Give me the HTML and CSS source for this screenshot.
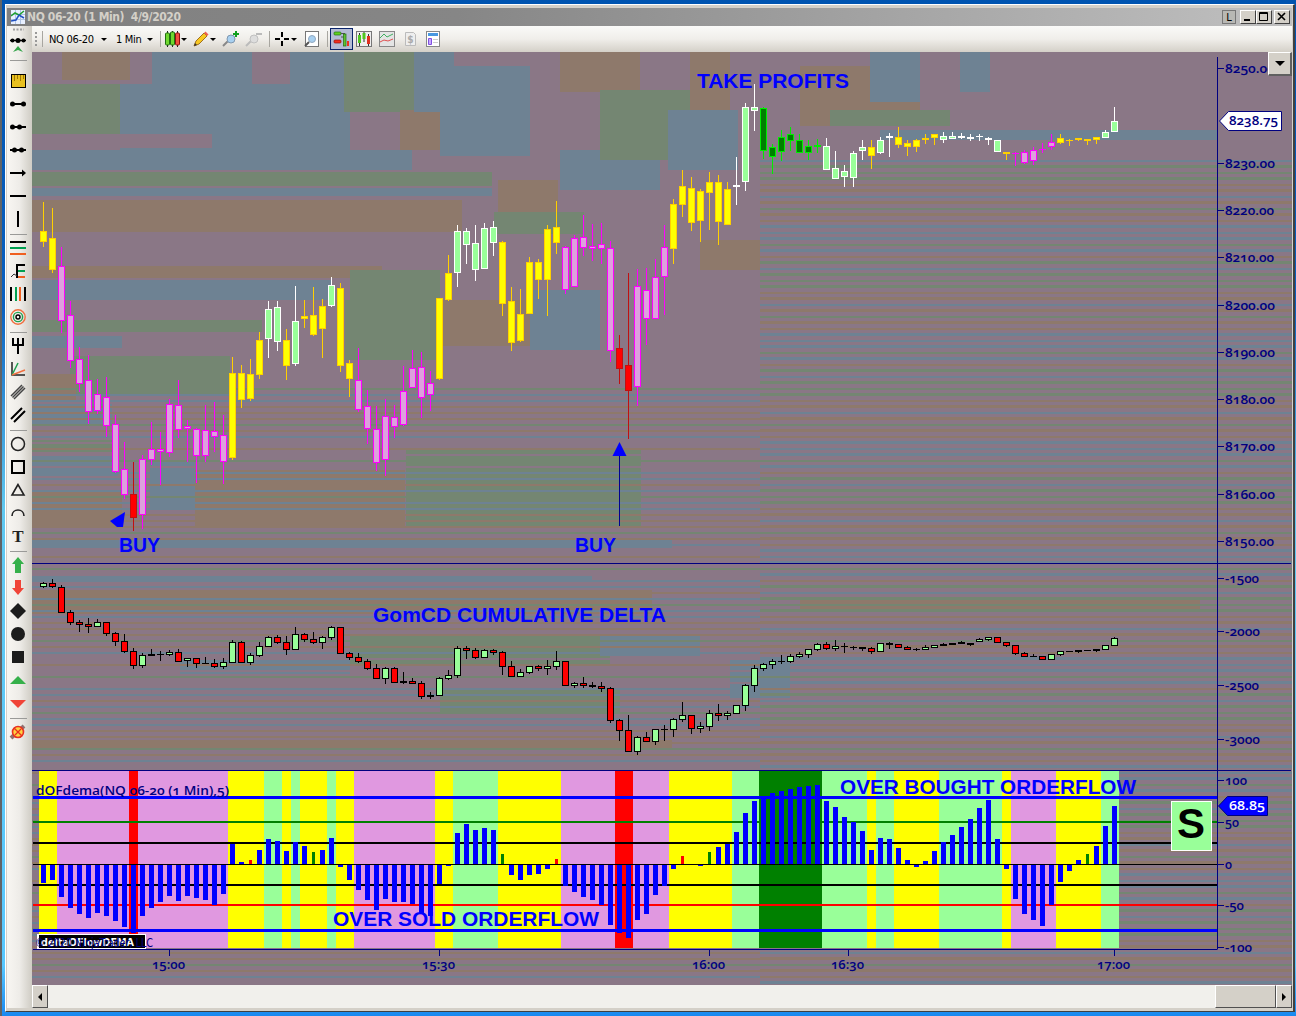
FILE: index.html
```
<!DOCTYPE html>
<html lang="en">
<head>
<meta charset="UTF-8">
<title>NQ 06-20 (1 Min) 4/9/2020</title>
<link rel="stylesheet" href="styles.css">
</head>
<body>
<div class="window">
  <div class="titlebar">
    <svg class="app-icon" width="14" height="14" viewBox="0 0 14 14"><rect width="14" height="14" fill="#e8f0ff"/><path d="M0 4.5h14M0 9.5h14M4.5 0v14M9.5 0v14" stroke="#b0c4e4"/><path d="M0 6l4-3 4 2 5-4" stroke="#20a030" stroke-width="1.5" fill="none"/><path d="M0 11l5-1 3-5 5 3" stroke="#2050c0" stroke-width="1.5" fill="none"/></svg>
    <span class="title">NQ 06-20 (1 Min)&nbsp; 4/9/2020</span>
    <div class="window-buttons">
      <span class="win-btn link-btn">L</span>
      <span class="win-btn"><svg width="14" height="12"><path d="M3 9h6" stroke="#000" stroke-width="2"/></svg></span>
      <span class="win-btn"><svg width="14" height="12"><path d="M2.5 1.5h8v8h-8zM2 2.5h9" stroke="#000" fill="none"/></svg></span>
      <span class="win-btn close-btn"><svg width="14" height="12"><path d="M3 2l7 7M10 2l-7 7" stroke="#000" stroke-width="1.6"/></svg></span>
    </div>
  </div>
  <div class="main">
    <div class="tools">
      <svg class="tools-head" width="18" height="43" viewBox="0 0 18 43"><path d="M3 2.5h11" stroke="#a0a0a0" stroke-width="2" stroke-dasharray="2 1.5"/><path d="M0 13.5h16" stroke="#000" stroke-width="1.4"/><circle cx="2.5" cy="13.5" r="2"/><circle cx="8" cy="13.5" r="2.5"/><circle cx="13.5" cy="13.5" r="2"/><path d="M3 25l5-6 5 6-5-2z" fill="#35a54a"/><path d="M0 33.5h17" stroke="#9a9a98"/></svg>
      <svg class="tool" viewBox="0 0 16 16"><rect x="1.5" y="1.5" width="14" height="13" fill="#e8c020" stroke="#000"/><path d="M4.500 2v6M7.500 2v4M10.500 2v6M13.500 2v4" stroke="#a07800"/></svg>
      <svg class="tool" viewBox="0 0 16 16"><path d="M2 8h12" stroke="#000" stroke-width="2"/><circle cx="2.500" cy="8" r="2.500"/><circle cx="13.500" cy="8" r="2.500"/></svg>
      <svg class="tool" viewBox="0 0 16 16"><path d="M2 8h14" stroke="#000" stroke-width="2"/><circle cx="2.500" cy="8" r="2.500"/><circle cx="9.500" cy="8" r="2.500"/></svg>
      <svg class="tool" viewBox="0 0 16 16"><path d="M0 8h16" stroke="#000" stroke-width="2"/><circle cx="4.500" cy="8" r="2.500"/><circle cx="11.500" cy="8" r="2.500"/></svg>
      <svg class="tool" viewBox="0 0 16 16"><path d="M0 8h13" stroke="#000" stroke-width="2"/><path d="M12 4.500l4 3.500-4 3.500z"/></svg>
      <svg class="tool" viewBox="0 0 16 16"><path d="M0 8h16" stroke="#000" stroke-width="2"/></svg>
      <svg class="tool" viewBox="0 0 16 16"><path d="M8 0v16" stroke="#000" stroke-width="2"/></svg>
      <div class="tool-sep"></div>
      <svg class="tool" viewBox="0 0 16 16"><path d="M0 2h16" stroke="#000" stroke-width="2"/><path d="M0 8h16" stroke="#00a050" stroke-width="2"/><path d="M0 14h16" stroke="#f06020" stroke-width="2"/></svg>
      <svg class="tool" viewBox="0 0 16 16"><path d="M15 2H7v13" stroke="#000" stroke-width="2" fill="none"/><path d="M8 8h7" stroke="#00a050" stroke-width="2"/><path d="M8 14h7" stroke="#f06020" stroke-width="2"/><path d="M1 14l3-3 3 2" stroke="#333" fill="none"/></svg>
      <svg class="tool" viewBox="0 0 16 16"><path d="M1 1v14M15 1v14" stroke="#000" stroke-width="2"/><path d="M6 1v14" stroke="#00a050" stroke-width="2"/><path d="M10 1v14" stroke="#f06020" stroke-width="2"/></svg>
      <svg class="tool" viewBox="0 0 16 16"><g fill="none" stroke-width="1.400"><circle cx="8" cy="8" r="7.200" stroke="#f07040"/><circle cx="8" cy="8" r="4.600" stroke="#20a050"/><circle cx="8" cy="8" r="2" stroke="#000"/></g></svg>
      <div class="tool-sep"></div>
      <svg class="tool" viewBox="0 0 16 16"><path d="M3 0v7h10V0M8 0v16" stroke="#000" stroke-width="2" fill="none"/></svg>
      <svg class="tool" viewBox="0 0 16 16"><path d="M2 1v13h13" stroke="#222" stroke-width="1.500" fill="none"/><path d="M2 14L8 2" stroke="#20a050" stroke-width="1.500"/><path d="M2 14l13-5" stroke="#f07040" stroke-width="1.500"/></svg>
      <svg class="tool" viewBox="0 0 16 16"><path d="M1 12L12 1M2.500 13.500l11-11M4 15L15 4" stroke="#444" stroke-width="1.500"/></svg>
      <svg class="tool" viewBox="0 0 16 16"><path d="M1 12L12 1M4 15L15 4" stroke="#000" stroke-width="2"/></svg>
      <div class="tool-sep"></div>
      <svg class="tool" viewBox="0 0 16 16"><circle cx="8" cy="8" r="6.500" fill="none" stroke="#222" stroke-width="1.500"/></svg>
      <svg class="tool" viewBox="0 0 16 16"><path d="M2 2h12v12H2z" fill="none" stroke="#000" stroke-width="2"/></svg>
      <svg class="tool" viewBox="0 0 16 16"><path d="M8 2.500L2 13h12z" fill="none" stroke="#222" stroke-width="1.600"/></svg>
      <svg class="tool" viewBox="0 0 16 16"><path d="M2 11c0-8 12-8 12 0" fill="none" stroke="#222" stroke-width="1.600"/></svg>
      <svg class="tool" viewBox="0 0 16 16"><text x="8" y="14" class="tool-letter">T</text></svg>
      <div class="tool-sep"></div>
      <svg class="tool" viewBox="0 0 16 16"><path d="M8 0l6 7h-3v9H5V7H2z" fill="#35b04a"/></svg>
      <svg class="tool" viewBox="0 0 16 16"><path d="M8 15l6-7h-3V0H5v8H2z" fill="#f04438"/></svg>
      <svg class="tool" viewBox="0 0 16 16"><path d="M8 0l8 8-8 8-8-8z" fill="#1c1c1c"/></svg>
      <svg class="tool" viewBox="0 0 16 16"><circle cx="8" cy="8" r="7" fill="#1c1c1c"/></svg>
      <svg class="tool" viewBox="0 0 16 16"><rect x="2" y="2" width="12" height="12" fill="#1c1c1c"/></svg>
      <svg class="tool" viewBox="0 0 16 16"><path d="M8 4l8 8H0z" fill="#35b04a"/></svg>
      <svg class="tool" viewBox="0 0 16 16"><path d="M0 5h16l-8 8z" fill="#f04438"/></svg>
      <div class="tool-sep"></div>
      <svg class="tool" viewBox="0 0 16 16"><path d="M1 14L14 2" stroke="#907070" stroke-width="4"/><circle cx="8" cy="8" r="5.500" fill="#ffd040" stroke="#e83020" stroke-width="1.600"/><path d="M4 4l8 8M5 11l6-6" stroke="#e83020" stroke-width="1.300"/></svg>
    </div>
    <div class="workspace">
      <div class="toolbar">
        <span class="grip"></span><i class="bar-sep"></i>
        <span class="pick pick-symbol">NQ 06-20</span><i class="caret"></i>
        <span class="pick pick-period">1 Min</span><i class="caret"></i>
        <i class="bar-sep sep-a"></i>
        <svg class="ic" viewBox="0 0 16 16"><path d="M3.500 0v16M8.500 0v16M13.500 0v16" stroke="#222"/><rect x="1.500" y="2" width="4" height="12" rx="1" fill="#70d830" stroke="#207010"/><rect x="6.500" y="1" width="4" height="13" rx="1" fill="#70d830" stroke="#207010"/><rect x="11.500" y="2" width="4" height="12" rx="1" fill="#f05040" stroke="#901010"/></svg><i class="caret tight"></i>
        <svg class="ic ic-pencil" viewBox="0 0 16 16"><path d="M1 15l2-5 8-8 3 3-8 8z" fill="#f8c820" stroke="#a07020"/><path d="M11 2l1.500-1.500 3 3L14 5z" fill="#f06050"/><path d="M1 15l1-3 2 2z" fill="#333"/></svg><i class="caret tight"></i>
        <svg class="ic ic-zoom" viewBox="0 0 16 16"><path d="M0 15l5-5" stroke="#888" stroke-width="2"/><circle cx="8" cy="8" r="4" fill="#a8d0f0" stroke="#8098b0"/><path d="M13 0v6M10 3h6" stroke="#10a020" stroke-width="2"/></svg>
        <svg class="ic ic-zoom-out" viewBox="0 0 16 16"><path d="M0 15l5-5" stroke="#bbb" stroke-width="2"/><circle cx="8" cy="8" r="4" fill="#ddd" stroke="#c0c0c0"/><path d="M10 3h6" stroke="#bbb" stroke-width="2"/></svg>
        <i class="bar-sep sep-b"></i>
        <svg class="ic ic-cross" viewBox="0 0 16 16"><path d="M8 1v5M8 10v5M1 8h5M10 8h5" stroke="#000" stroke-width="2"/></svg><i class="caret tight"></i>
        <svg class="ic ic-page" viewBox="0 0 16 16"><rect x="1.500" y=".5" width="13" height="15" fill="#fff" stroke="#777"/><path d="M1 15l4-4" stroke="#555" stroke-width="2"/><circle cx="8" cy="8" r="3.500" fill="#a8d0f0" stroke="#90a8c0"/></svg>
        <i class="bar-sep sep-c"></i>
        <span class="ic-selected"><svg class="ic" viewBox="0 0 16 16"><rect x="1" y="1" width="7" height="3" rx="1" fill="#60d020" stroke="#207010" stroke-width=".7"/><rect x="1" y="9" width="7" height="3" rx="1" fill="#f03020" stroke="#901010" stroke-width=".7"/><path d="M8 2.500h4M8 6h4" stroke="#555"/><rect x="10.500" y="3" width="2.500" height="12" fill="#60c030" stroke="#207010" stroke-width=".7"/><rect x="14" y="10" width="2" height="5" fill="#f03020"/></svg></span>
        <svg class="ic ic-box" viewBox="0 0 16 16"><rect x=".5" y=".5" width="15" height="15" fill="#eee" stroke="#777"/><path d="M3.500 2v13M8 1v10M12.500 3v12" stroke="#333"/><path d="M3.500 4v8M8 2v6" stroke="#50c820" stroke-width="3"/><path d="M12.500 5v8" stroke="#e03020" stroke-width="3"/></svg>
        <svg class="ic" viewBox="0 0 16 16"><rect x=".5" y=".5" width="15" height="15" fill="#e4e4e4" stroke="#888"/><path d="M1 7l4-4 3 3 6-3" stroke="#40b060" fill="none"/><path d="M1 11l4-2 4 1 5-2" stroke="#e05050" fill="none"/></svg>
        <svg class="ic" viewBox="0 0 16 16"><path d="M3.500 1.500h8l2 2v11h-10z" fill="#eee" stroke="#bbb"/><text x="8.500" y="12" class="dollar">$</text></svg>
        <svg class="ic" viewBox="0 0 16 16"><rect x="1.500" y=".5" width="13" height="15" fill="#fff" stroke="#888"/><path d="M3 3.500h10" stroke="#4898e0" stroke-width="3"/><path d="M3.500 7.500h3v6h-3z" fill="#c8a8ff" stroke="#8050e0"/><path d="M8 8.500h5M8 11.500h5" stroke="#ccc"/></svg>
      </div>
      <div class="chart-area">
        <svg id="chart" width="1260" height="933" viewBox="32 52 1260 933"></svg>
        <button class="menu-btn" aria-label="Chart menu"><i class="caret"></i></button>
      </div>
      <div class="scrollbar">
        <span class="scroll-btn"><i class="arrow-left"></i></span>
        <span class="scroll-track"></span>
        <span class="scroll-thumb"></span>
        <span class="scroll-btn"><i class="arrow-right"></i></span>
      </div>
    </div>
  </div>
</div>
<script src="script.js"></script>
</body>
</html>
```
FILE: styles.css
```
* {
  box-sizing: border-box;
}

body {
  margin: 0;
  width: 1296px;
  height: 1016px;
  overflow: hidden;
  padding: 4px 1px 4px 4px;
  background: linear-gradient(#0054b0, #0a60c0 30%, #60c8f0 50%, #58c8ff 95%, #1888f0);
  font-family: "DejaVu Sans Condensed", "DejaVu Sans", sans-serif;
  border-left: 2px solid #606468;
}

.window {
  height: 1008px;
  display: flex;
  flex-direction: column;
  background: #d4d0c8;
  border: 1px solid #fff;
  border-right: 2px solid #404040;
  border-bottom: 1px solid #404040;
  padding: 3px 1px 3px 1px;
  margin-left: -1px;
}

.titlebar {
  height: 18px;
  flex: none;
  display: flex;
  align-items: center;
  padding-left: 4px;
  background: linear-gradient(90deg, #808080, #868686 35%, #c0c0c0);
}

.title {
  margin-left: 2px;
  font: bold 12px "DejaVu Sans Condensed", sans-serif;
  letter-spacing: -0.4px;
  white-space: nowrap;
  color: #d4d0c8;
}

.window-buttons {
  margin-left: auto;
  display: flex;
  padding-right: 2px;
}

.win-btn {
  width: 16px;
  height: 14px;
  background: #d4d0c8;
  border: 1px solid #fff;
  border-right-color: #404040;
  border-bottom-color: #404040;
}

.win-btn svg {
  display: block;
}

.link-btn {
  width: 14px;
  margin-right: 4px;
  border: 1px solid #777;
  background: #b8b8b4;
  font: 11px/13px "DejaVu Sans Condensed", sans-serif;
  text-align: center;
}

.close-btn {
  margin-left: 2px;
}

.main {
  flex: 1;
  display: flex;
  min-height: 0;
}

.tools {
  width: 25px;
  flex: none;
  padding: 1px 0 0 3px;
  background: linear-gradient(90deg, #f8f6f2, #eeece8 50%, #cfccc4);
}

.tools-head,
.tool {
  display: block;
}

.tool {
  width: 16px;
  height: 16px;
  margin: 3px 0 7px;
  overflow: visible;
}

.tool + .tool {
  margin-top: 0;
}

.tool-sep {
  width: 17px;
  height: 1px;
  margin: 0 0 5px;
  background: #9a9a98;
}

.tool-sep + .tool {
  margin-top: 0;
}

.tool-letter {
  font: bold 17px/1 "Liberation Serif", serif;
  text-anchor: middle;
  fill: #222;
}

.dollar {
  font: bold 10px "DejaVu Sans Condensed", sans-serif;
  text-anchor: middle;
  fill: #aaa;
}

.workspace {
  flex: none;
  width: 1260px;
  display: flex;
  flex-direction: column;
}

.toolbar {
  height: 26px;
  flex: none;
  display: flex;
  align-items: center;
  padding-left: 3px;
  background: linear-gradient(#fafaf8, #f0eeea 50%, #d4d0c8);
}

.grip {
  width: 2px;
  height: 15px;
  background: repeating-linear-gradient(#999 0 2px, transparent 2px 4px);
}

.bar-sep {
  width: 1px;
  height: 16px;
  margin-left: 5px;
  background: #a8a6a0;
}

.pick {
  margin-left: 6px;
  font-size: 11px;
  letter-spacing: -0.3px;
  white-space: nowrap;
}

.pick-symbol {
  width: 52px;
}

.pick-period {
  margin-left: 9px;
  width: 31px;
}

.caret {
  width: 0;
  height: 0;
  border: 3px solid transparent;
  border-top-color: #000;
  border-bottom: 0;
}

.caret.tight {
  margin-left: 1px;
}

.sep-a {
  margin-left: 7px;
  margin-right: 3px;
}

.ic {
  width: 16px;
  height: 16px;
  flex: none;
  margin-right: 7px;
  overflow: visible;
}

.ic:has(+ .tight) {
  margin-right: 0;
}

.ic-pencil {
  margin-left: 6px;
}

.ic-zoom {
  margin-left: 7px;
}

.sep-b {
  margin-left: 0;
  margin-right: 4px;
}

.ic-page {
  margin-left: 7px;
}

.sep-c {
  margin-left: 0;
  margin-right: 2px;
}

.ic-selected {
  width: 23px;
  height: 22px;
  margin-right: 3px;
  padding: 2px;
  background: #b4bcd4;
  border: 1px solid #0a246a;
}

.chart-area {
  position: relative;
  height: 933px;
}

#chart {
  display: block;
}

.menu-btn {
  position: absolute;
  top: 0;
  right: 0;
  width: 24px;
  height: 24px;
  padding: 0;
  display: flex;
  align-items: center;
  justify-content: center;
  background: #d4d0c8;
  border: 1px solid #fff;
  border-right: 2px solid #606060;
  border-bottom: 2px solid #606060;
  border-radius: 0;
}

.menu-btn .caret {
  border-width: 5px 5px 0;
}

.scrollbar {
  height: 24px;
  display: flex;
  background: #f1f0ec;
}

.scroll-btn,
.scroll-thumb {
  background: #d4d0c8;
  border: 1px solid #fff;
  border-right-color: #505050;
  border-bottom-color: #505050;
}

.scroll-btn {
  width: 16px;
  display: flex;
  align-items: center;
  justify-content: center;
}

.scroll-track {
  flex: 1;
}

.scroll-thumb {
  width: 61px;
}

.arrow-left,
.arrow-right {
  border: 4px solid transparent;
}

.arrow-left {
  border-right-color: #000;
  border-left: 0;
}

.arrow-right {
  border-left-color: #000;
  border-right: 0;
}

/* chart */
.axis {
  stroke: #000080;
  stroke-width: 1;
  fill: none;
}

.axis-label {
  font: 600 13px "Open Sans", sans-serif;
  font-variant-numeric: oldstyle-nums;
  fill: #000080;
}

.note {
  font: bold 20px "Liberation Sans", Arial, sans-serif;
  fill: #0000ff;
}

.tag-text {
  font: 600 13px "Open Sans", sans-serif;
  font-variant-numeric: oldstyle-nums;
  fill: #000080;
}

.tag-light {
  fill: #fff;
}

.signal {
  font: bold 42px "Liberation Sans", Arial, sans-serif;
  text-anchor: middle;
}

.demo {
  font: bold 11px "DejaVu Sans Condensed", sans-serif;
  fill: #fff;
}

.copyright {
  font: 12px "DejaVu Sans Condensed", sans-serif;
  fill: #000080;
}
```
FILE: script.js
```
const STEP = 9;
const X0 = 43;
const parts = [];

function rect(x, y, w, h, fill, extra = '') {
  parts.push(`<rect x="${x}" y="${y}" width="${w}" height="${h}" fill="${fill}" ${extra}/>`);
}

function text(x, y, str, cls, width) {
  const len = width ? ` textLength="${width}" lengthAdjust="spacingAndGlyphs"` : '';
  parts.push(`<text x="${x}" y="${y}" class="${cls}"${len}>${str}</text>`);
}

// mottled backdrop
const tints = { p: '#8a7786', g: '#748672', b: '#6e8293', n: '#8e796b' };

rect(32, 52, 1260, 933, tints.p);
const patches = [
  'n 62 52 68 28', 'b 152 52 100 60', 'g 32 84 92 50', 'b 120 84 230 70', 'b 290 52 54 70', 'g 344 52 70 60',
  'p 32 134 180 14', 'b 32 150 380 20', 'g 32 172 460 14', 'b 32 188 460 8', 'n 32 200 430 32', 'p 32 234 420 30',
  'n 32 266 350 12', 'b 32 280 300 20', 'g 350 270 90 90', 'g 32 320 230 12', 'b 32 336 90 12', 'g 70 356 160 40',
  'n 32 374 44 28', 'b 32 404 80 20', 'g 32 440 80 12', 'b 32 456 86 20', 'n 32 490 90 38', 'b 150 460 45 50',
  'n 195 470 210 56', 'g 406 448 235 80', 'n 440 300 90 46', 'g 345 300 95 60', 'b 530 290 70 60', 'n 400 110 100 40',
  'b 440 66 90 90', 'n 498 180 60 32', 'b 560 150 100 40', 'g 494 212 90 22', 'b 414 52 40 60', 'n 560 52 80 40',
  'g 600 90 90 70', 'n 690 52 40 60', 'b 668 110 70 60', 'n 800 66 120 60', 'b 870 52 50 50', 'b 960 52 30 40',
  'g 830 110 120 16', 'b 880 130 337 10', 'n 700 240 60 30', 'p 32 528 600 8', 'b 32 540 640 8', 'n 32 590 620 24',
  'b 32 574 560 6', 'g 350 636 260 30', 'b 600 636 100 20', 'g 440 690 180 24', 'b 180 660 170 14', 'n 32 740 640 10',
  'b 730 660 60 38', 'n 800 600 400 12'
];
for (const p of patches) {
  const [t, x, y, w, h] = p.split(' ');
  rect(x, y, w, h, tints[t]);
}
for (let y = 160; y < 985; y += 12) {
  rect(760, y, 532, 2, tints['nbg'[(y / 12 | 0) % 3]]);
  rect(760, y + 5, 532, 3, tints['bgn'[(y / 36 | 0) % 3]]);
  if (y > 380) {
    rect(32, y, 728, 2, tints['bng'[(y / 12 | 0) % 3]]);
    rect(32, y + 6, 728, 2, tints['pbn'[(y / 36 | 0) % 3]]);
  }
}

// colour, high, body top, body bottom, low (pixels)
const price = `Y202,231,242,247 Y208,238,270,273 M247,266,321,333 M301,315,361,368 M347,359,384,392 M355,380,412,424 M379,394,411,414
M377,397,426,437 M415,424,472,473 M442,469,495,499 R462,494,518,531 M455,459,515,529 M422,449,460,465 M432,449,452,485 M399,404,453,457
M380,405,430,438 M420,426,429,462 M428,429,456,483 M405,430,456,462 M402,431,437,452 M415,435,462,484 Y357,373,458,460 Y365,373,400,408
Y359,374,399,401 Y332,340,375,379 G301,309,339,358 G301,307,342,351 Y329,340,366,380 G286,321,364,366 Y300,316,319,328 Y287,315,335,336
Y299,306,329,358 G277,285,306,307 Y283,288,366,372 Y360,363,379,397 M348,380,410,412 M390,406,429,444 M406,429,463,471 M399,416,460,476
M405,417,427,438 M366,391,425,426 M350,368,388,388 M352,367,398,418 M371,383,395,411 Y298,298,379,380 Y255,273,300,301 G225,231,273,287
G228,231,245,264 G225,243,270,281 G223,228,269,269 G221,227,243,256 Y241,242,304,316 Y287,301,343,351 Y289,314,341,342 Y257,262,314,314
Y259,262,280,299 Y225,229,280,316 Y201,227,243,254 M246,247,290,294 M235,238,287,287 M215,237,248,256 M224,246,249,261 M223,244,249,264
M241,248,351,362 R335,348,369,384 R273,365,391,439 M269,286,387,406 M268,290,319,345 M259,277,319,319 M225,247,277,315 Y199,204,249,264
Y170,186,205,217 Y177,188,223,231 Y189,191,221,242 Y172,182,193,230 Y175,182,222,245 Y182,189,225,225 G157,185,187,205 G103,107,182,191
G84,107,111,131 D107,108,151,159 D144,147,157,174 D130,137,152,161 D127,134,141,151 D134,140,153,153 D140,146,153,160 D139,145,147,153
G138,146,170,170 G151,168,179,179 G165,171,177,187 G151,153,178,187 G140,147,151,160 Y140,147,156,169 G137,140,153,154 G133,136,138,157
Y127,137,145,148 Y140,143,147,156 Y139,140,147,152 Y134,138,140,144 Y134,134,138,145 G132,136,140,143 G132,136,139,139 G133,136,138,139
G134,137,139,141 G134,136,137,141 G137,138,140,145 G140,140,152,152 Y152,152,154,160 M152,153,154,166 M150,152,163,164 M147,150,161,165
M143,149,150,153 M134,142,147,150 Y134,138,143,144 Y139,140,141,146 Y138,138,140,141 Y139,139,141,145 Y137,137,140,144 G130,132,138,138
G107,121,132,132`.split(/\s+/);

const delta = `g582,583,587,588 r579,583,587,588 r585,587,613,613 r610,612,623,625 r620,622,625,632 r618,624,627,633 g619,622,627,627
r622,622,634,636 r632,633,642,646 r634,641,652,653 r648,651,666,669 g653,655,666,668 k649,654,656,656 k651,654,655,661 g650,652,655,656
r649,652,662,662 g658,658,661,667 r658,658,664,668 k657,663,664,664 r659,663,667,668 g658,662,667,669 g640,642,663,663 r641,642,663,663
g653,655,663,665 g642,646,656,657 g636,637,647,647 r635,637,643,644 r636,642,650,655 g627,634,650,650 r633,634,640,642 r632,639,643,644
g636,637,643,649 g626,627,638,640 r627,627,654,654 r652,653,658,660 r653,657,662,663 r659,661,669,670 r664,668,679,679 g667,668,679,684
r667,668,683,683 k672,681,683,684 r678,681,684,684 r681,683,697,699 k692,695,697,699 g677,678,696,696 g670,675,679,680 g646,648,676,678
r646,648,651,659 r648,650,658,659 g649,650,658,658 r649,650,653,655 r651,652,667,675 r661,666,677,677 g669,672,677,677 g666,666,673,674
r665,666,669,671 g660,666,669,675 g651,661,667,670 r661,661,686,686 g682,683,686,688 r677,683,686,688 k682,685,687,688 r682,686,689,692
r687,688,721,723 r719,720,731,741 r715,730,752,752 g736,737,752,755 r732,737,742,742 g729,729,742,745 k725,729,730,741 g718,719,730,737
g702,715,720,722 r715,715,729,734 g722,726,729,733 g710,713,727,731 r704,713,716,721 g711,713,716,720 g705,705,714,714 g684,685,706,711
g665,668,686,692 g663,664,669,671 g659,661,665,669 k655,661,662,664 g654,656,662,663 g652,654,657,658 g649,649,655,658 g643,644,650,651
r642,644,649,650 g640,646,649,651 k643,646,647,653 k646,647,648,650 k647,647,649,651 r647,648,652,654 g643,643,652,652 k642,643,645,649
r644,644,648,648 r646,647,650,650 k648,649,650,651 g645,647,650,650 g645,645,648,648 k643,644,646,646 k643,643,645,645 k641,642,644,644
k643,643,645,646 g638,639,642,642 g637,637,640,641 r637,637,643,643 r642,642,646,647 r645,645,654,655 r652,653,657,657 k654,656,657,657
r656,656,660,660 g654,654,660,660 g651,651,655,656 k651,651,652,652 k650,650,652,653 k650,650,651,651 k649,649,651,652 g645,645,650,650
g637,638,646,646`.split(/\s+/);

const looks = {
  Y: ['#ffd000', '#ffff00'], M: ['#ff00ff', '#dda0dd'], G: ['#ffffff', '#99ff99'], D: ['#00ee00', '#008000'], R: ['#c01010', '#ff0000'],
  g: ['#000', '#99ff99'], r: ['#000', '#ff0000'], k: ['#000', '#000']
};

function candles(list) {
  list.forEach((item, i) => {
    const [line, fill] = looks[item[0]];
    const [hi, top, bot, lo] = item.slice(1).split(',').map(Number);
    const x = X0 + i * STEP;
    rect(x, hi, 1, Math.max(lo - hi, 1), line);
    rect(x - 3, top, 7, bot - top, line);
    if (bot - top > 2) rect(x - 2, top + 1, 5, bot - top - 2, fill);
  });
}

// lower panel background runs
const runs = 'Y2 M8 R1 M10 Y4 G2 Y1 G1 Y3 G1 Y2 M9 Y2 G5 Y7 M6 R2 M4 Y7 G3 D7 G5 Y1 G2 Y5 G7 Y1 M5 Y5 G2'.split(' ');
let bx = X0 - 4;
for (const r of runs) {
  const w = r.slice(1) * STEP;
  rect(bx, 771, w, 177, { Y: '#ffff00', M: '#e098e0', R: '#ff0000', G: '#99ff99', D: '#008000' }[r[0]]);
  bx += w;
}
rect(33, 796, 1184, 3, '#0000ff');
rect(33, 821, 1184, 2, '#008000');
rect(33, 842, 1184, 2, '#000');
rect(33, 884, 1184, 2, '#000');
rect(33, 904, 1184, 2, '#ff0000');
rect(33, 929, 1184, 3, '#0000ff');

const flow = [883, 880, 897, 908, 914, 918, 913, 916, 921, 927, 933, 916, 908, 902, 896, 901, 896, 898, 900, 905, 894, 844, 862, 860, 850,
  839, 841, 851, 842, 846, 852, 850, 838, 867, 880, 890, 900, 910, 899, 902, 902, 904, 914, 916, 884, 866, 833, 824, 830, 828, 830, 854,
  875, 880, 875, 874, 869, 859, 886, 892, 897, 900, 905, 925, 933, 938, 920, 914, 895, 886, 869, 856, 864, 866, 852, 847, 844, 832, 813,
  801, 796, 793, 791, 789, 787, 786, 785, 801, 807, 817, 822, 831, 850, 838, 839, 848, 860, 867, 861, 851, 842, 835, 827, 819, 808, 800,
  839, 869, 899, 914, 920, 926, 905, 882, 871, 860, 854, 846, 826, 806];
const thin = { 23: '#ff0000', 57: '#ff0000', 71: '#ff0000', 30: '#008000', 51: '#008000', 74: '#008000', 116: '#008000' };
flow.forEach((y, i) => {
  const w = thin[i] ? 3 : 5;
  rect(X0 + i * STEP - (w - 1) / 2, Math.min(y, 864), w, Math.abs(y - 864), thin[i] || '#0000ff');
});
rect(33, 864, 1184, 1, '#000');

candles(delta);

// axes
parts.push('<path class="axis" d="M32 563.500H1291M32 770.500H1291M33 949.500H1217.500M1217.500 57V949"/>');
const scale = [[68, '8250.00', 50], [163, '8230.00', 50], [210, '8220.00', 49], [257, '8210.00', 49], [305, '8200.00', 50], [352, '8190.00', 50],
  [399, '8180.00', 50], [446, '8170.00', 50], [494, '8160.00', 50], [541, '8150.00', 49], [578, '-1500', 34], [631, '-2000', 35],
  [685, '-2500', 34], [739, '-3000', 35], [780, '100', 22], [822, '50', 14], [864, '0', 7], [905, '-50', 19], [947, '-100', 27]];
for (const [y, label, w] of scale) {
  rect(1218, y, 6, 1, '#000080');
  text(1225, y + 5, label, 'axis-label', w);
}
for (const [x, label] of [[169, '15:00'], [439, '15:30'], [709, '16:00'], [848, '16:30'], [1114, '17:00']]) {
  rect(x, 950, 1, 6, '#000080');
  text(x - 17, 969, label, 'axis-label', 33);
}

// annotations
text(697, 87.5, 'TAKE PROFITS', 'note', 152);
text(119, 551.5, 'BUY', 'note', 41);
text(575, 551.5, 'BUY', 'note', 41);
text(373, 621.5, 'GomCD CUMULATIVE DELTA', 'note', 293);
text(333, 925.5, 'OVER SOLD ORDERFLOW', 'note', 266);
text(840, 793.5, 'OVER BOUGHT ORDERFLOW', 'note', 296);
candles(price);
parts.push('<path d="M125 512L110 521l7 6h6z" fill="#0000ff"/>');
parts.push('<path d="M619.500 442l7 14h-14z" fill="#0000ff"/>');
rect(619, 456, 1, 70, '#000090');

text(36, 795, 'dOFdema(NQ 06-20 (1 Min),5)', 'axis-label', 193);
rect(37, 934, 109, 15, '#fff');
rect(39, 935, 106, 13, '#000');
text(41, 946, 'deltaOFlowDEMA', 'demo', 93);
text(35, 947, '© 2020 NinjaTrader, LLC', 'copyright', 118);

rect(1171.5, 801.5, 40, 49, '#99ff99', 'stroke="#fff"');
text(1191, 838, 'S', 'signal');

// price markers
parts.push('<path d="M1219.500 121l9-9.500h53v19h-53z" fill="#fff" stroke="#000080"/>');
text(1229, 125, '8238.75', 'tag-text', 49);
parts.push('<path d="M1218.500 806l9-9.500h40v19h-40z" fill="#0000ff" stroke="#000080"/>');
text(1229, 810, '68.85', 'tag-text tag-light', 36);

document.getElementById('chart').innerHTML = parts.join('');
```
